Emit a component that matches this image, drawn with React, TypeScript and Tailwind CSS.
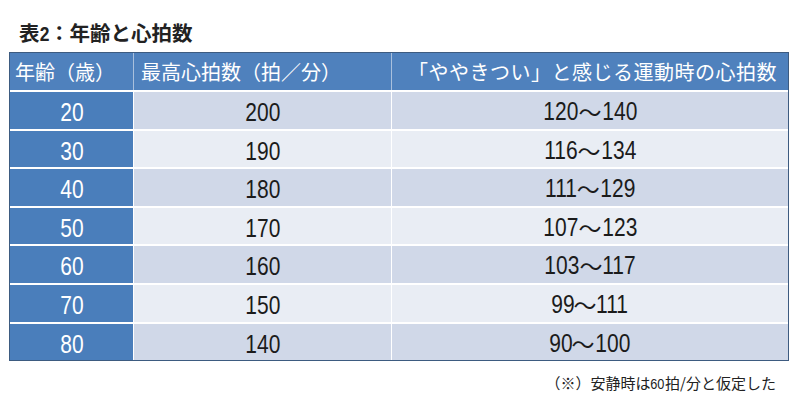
import React from 'react';

const rows = [
  { age: '20', max: '200', from: '120', to: '140' },
  { age: '30', max: '190', from: '116', to: '134' },
  { age: '40', max: '180', from: '111', to: '129' },
  { age: '50', max: '170', from: '107', to: '123' },
  { age: '60', max: '160', from: '103', to: '117' },
  { age: '70', max: '150', from: '99', to: '111' },
  { age: '80', max: '140', from: '90', to: '100' },
];

const jp = { fontFamily: '"Noto Sans CJK JP", "Liberation Sans", sans-serif' };
const narrow = { fontFamily: '"Liberation Sans", "Noto Sans CJK JP", sans-serif' };

// condensed numbers, like the Arial Narrow look of the source table
const Num = ({ children }: { children: React.ReactNode }) => (
  <span className="inline-block scale-x-[0.84]" style={narrow}>
    {children}
  </span>
);

const App = () => {
  return (
    <div className="w-[798px] h-[402px] bg-white overflow-hidden" style={jp}>
      <h1 className="pl-[19px] pt-[18px] h-[52px] text-[20.5px] font-semibold text-[#222] leading-[28px]">
        表<span className="inline-block scale-x-[0.85] -mx-[1px]" style={narrow}>2</span>：年齢と心拍数
      </h1>

      <div className="ml-[9px] w-[780px] border border-[#3d5b80] bg-white">
        <div className="grid grid-cols-[124px_258px_396px] h-[37px] bg-[#4f81bd] text-white text-[20px] leading-[37px]">
          <div className="pl-[5px] border-r border-[#a9c0dd]">年齢（歳）</div>
          <div className="pl-[7px] border-r border-[#a9c0dd]">最高心拍数（拍／分）</div>
          <div className="pl-[16px] whitespace-nowrap tracking-[0.5px]">
            「ややきつい」と感じる運動時の心拍数
          </div>
        </div>

        {rows.map((r, i) => {
          const bg = i % 2 === 0 ? 'bg-[#d0d8e8]' : 'bg-[#e9edf4]';
          return (
            <div
              key={r.age}
              className="grid grid-cols-[124px_258px_396px] h-[38.6px] border-t-2 border-white text-[25px] leading-[36px] overflow-hidden"
            >
              <div className="bg-[#4a7ebb] text-white text-center border-r border-white">
                <Num>{r.age}</Num>
              </div>
              <div className={`${bg} text-[#1b1b1b] text-center border-r border-white`}>
                <Num>{r.max}</Num>
              </div>
              <div className={`${bg} text-[#1b1b1b] flex justify-center items-center`}>
                <span className="inline-block scale-x-[0.84] -mr-[3px]" style={narrow}>
                  {r.from}
                </span>
                <span className="text-[23px] leading-[36px]">〜</span>
                <span className="inline-block scale-x-[0.84] -ml-[3px]" style={narrow}>
                  {r.to}
                </span>
              </div>
            </div>
          );
        })}
      </div>

      <p className="text-right pr-[22px] pt-[10px] text-[15px] text-[#222] leading-[24px]">
        （※）安静時は
        <span className="inline-block scale-x-[0.85] -mx-[1px]" style={narrow}>60</span>
        拍/分と仮定した
      </p>
    </div>
  );
};

export default App;
